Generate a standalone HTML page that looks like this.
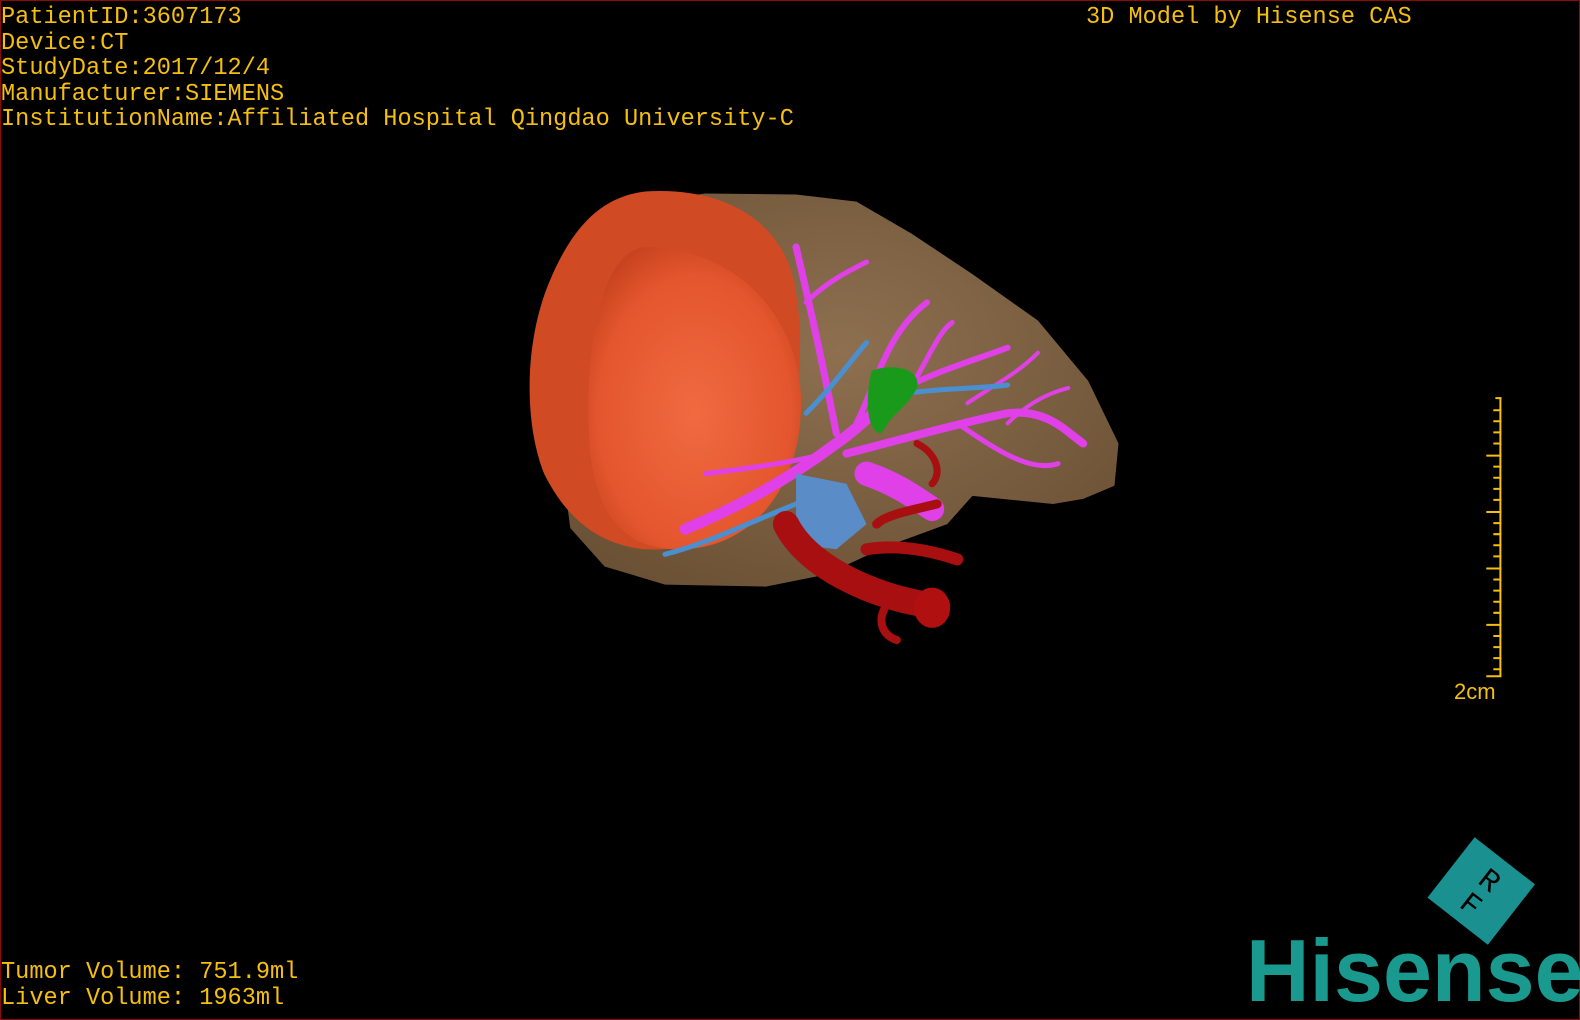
<!DOCTYPE html>
<html><head><meta charset="utf-8"><style>
html,body{margin:0;padding:0;background:#000}
body{width:1580px;height:1020px;position:relative;overflow:hidden}
.frame{position:absolute;left:0;top:0;width:1578px;height:1018px;border:1px solid #8b0a0a}
.t{position:absolute;font-family:"Liberation Mono",monospace;font-size:23.6px;color:#f5bf10;line-height:25.5px;white-space:pre}
svg{position:absolute;left:0;top:0}
.hs{position:absolute;left:1246px;top:928px;font-family:"Liberation Sans",sans-serif;font-weight:bold;font-size:88px;color:#1a9a8e;letter-spacing:0px;line-height:86px}
</style></head><body>
<svg width="1580" height="1020" viewBox="0 0 1568 1012" preserveAspectRatio="none">
<defs>
<radialGradient id="tu" cx="0.5" cy="0.55" r="0.6"><stop offset="0" stop-color="#f06a40"/><stop offset="0.75" stop-color="#e4562e"/><stop offset="1" stop-color="#c8441f"/></radialGradient>
<radialGradient id="lv" cx="0.5" cy="0.4" r="0.7"><stop offset="0" stop-color="#8e7050"/><stop offset="1" stop-color="#6a5034"/></radialGradient>
</defs>
<path d="M640,200 L700,192 L790,193 L850,200 L905,232 L965,272 L1030,318 L1080,378 L1110,440 L1106,482 L1075,495 L1045,500 L965,492 L940,520 L880,542 L820,570 L760,582 L660,580 L600,562 L566,524 L560,480 Z" fill="url(#lv)"/>
<path d="M640,190 C720,185 780,220 790,290 C800,350 790,420 770,470 C750,520 700,548 640,545 C590,540 560,510 540,470 C520,420 520,340 545,280 C570,220 600,195 640,190 Z" fill="#d04a24"/>
<path d="M640,245 C730,245 795,315 795,400 C795,475 755,540 680,545 C615,548 590,505 585,440 C580,370 590,250 640,245 Z" fill="url(#tu)"/>
<g stroke="#e040e8" fill="none" stroke-linecap="round">
<path d="M680,525 C740,500 790,470 830,440 C860,420 870,400 900,390" stroke-width="11"/>
<path d="M840,450 C880,440 950,420 1000,410 C1040,405 1060,430 1075,440" stroke-width="8"/>
<path d="M830,430 C820,380 810,330 790,245" stroke-width="7"/>
<path d="M850,420 C870,380 880,330 920,300" stroke-width="6"/>
<path d="M870,400 C920,370 960,360 1000,345" stroke-width="6"/>
<path d="M950,420 C980,440 1020,470 1050,460" stroke-width="5"/>
<path d="M700,470 C740,465 780,460 820,450" stroke-width="5"/>
<path d="M800,300 C820,280 840,270 860,260" stroke-width="5"/>
<path d="M900,390 C920,360 930,330 945,320" stroke-width="5"/>
<path d="M960,400 C990,380 1010,370 1030,350" stroke-width="4"/>
<path d="M1000,420 C1020,400 1040,390 1060,385" stroke-width="4"/>
<path d="M860,470 C890,480 910,495 925,505" stroke-width="24"/>
</g>
<g stroke="#4a90d0" fill="none" stroke-width="5" stroke-linecap="round">
<path d="M660,550 C700,540 740,520 790,500"/><path d="M800,410 C830,380 850,350 860,340"/><path d="M900,390 C940,385 980,385 1000,382"/>
</g>
<path d="M790,470 L840,480 L860,520 L830,545 L790,540 Z" fill="#5a8cc8"/>
<path d="M865,368 C885,360 915,365 910,385 C900,405 885,410 875,430 C860,430 858,395 865,368 Z" fill="#1a9a1a"/>
<g stroke="#a80f10" fill="none" stroke-linecap="round">
<path d="M780,520 C800,560 860,590 920,600" stroke-width="26"/>
<path d="M860,545 C890,540 920,545 950,555" stroke-width="12"/>
<path d="M880,600 C870,615 875,630 890,635" stroke-width="8"/>
<path d="M910,440 C930,450 935,470 925,480" stroke-width="7"/>
<path d="M870,520 C880,510 910,505 930,500" stroke-width="9"/>
</g>
<ellipse cx="925" cy="603" rx="18" ry="20" fill="#b01010"/>
<g stroke="#f5bf10" stroke-width="2">
<line x1="1489" y1="394" x2="1489" y2="671"/>
<path d="M1484,395h6M1482,407h8M1482,418h8M1482,429h8M1482,440h8M1475,452h15M1482,463h8M1482,474h8M1482,485h8M1482,496h8M1475,508h15M1482,519h8M1482,530h8M1482,541h8M1482,552h8M1475,564h15M1482,575h8M1482,586h8M1482,597h8M1482,608h8M1475,620h15M1482,631h8M1482,642h8M1482,653h8M1482,664h8M1475,671h15"/>
</g>
<g transform="translate(1470,884) rotate(38)">
<rect x="-38" y="-38" width="76" height="76" fill="#1a9090"/>
<text x="0" y="-4" font-family="Liberation Mono,monospace" font-size="30" fill="#000" text-anchor="middle">R</text>
<text x="0" y="26" font-family="Liberation Mono,monospace" font-size="30" fill="#000" text-anchor="middle">F</text>
</g>
</svg>
<div class="frame"></div>
<div class="t" style="left:1px;top:5px">PatientID:3607173
Device:CT
StudyDate:2017/12/4
Manufacturer:SIEMENS
InstitutionName:Affiliated Hospital Qingdao University-C</div>
<div class="t" style="left:1086px;top:5px">3D Model by Hisense CAS</div>
<div class="t" style="left:1454px;top:679px;font-family:'Liberation Sans',sans-serif;font-size:22px">2cm</div>
<div class="t" style="left:1px;top:960px">Tumor Volume: 751.9ml
Liver Volume: 1963ml</div>
<div class="hs">Hisense</div>
</body></html>
